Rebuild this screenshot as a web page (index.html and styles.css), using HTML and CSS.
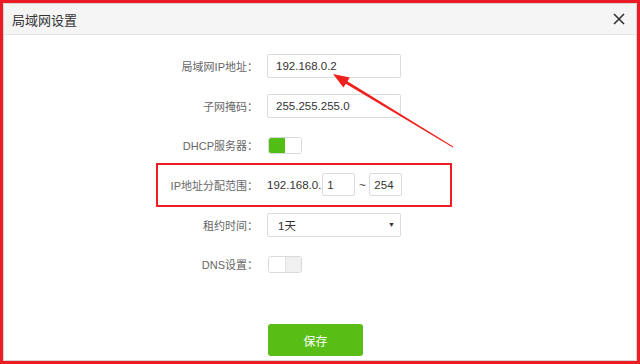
FILE: index.html
```html
<!DOCTYPE html>
<html lang="zh-CN">

<head>
    <meta charset="UTF-8">
    <meta name="viewport" content="width=device-width, initial-scale=1.0">
    <title>局域网设置</title>
    <link rel="stylesheet" href="styles.css">
</head>

<body>
    <div class="dialog">
        <div class="dialog-head">
            <h1>局域网设置</h1>
            <button class="close-btn">
                <svg width="12" height="12" viewBox="0 0 12 12">
                    <path d="M1 1L11 11M11 1L1 11" stroke="#333" stroke-width="1.6" fill="none"/>
                </svg>
            </button>
        </div>

        <div class="form">
            <div class="row">
                <label>局域网IP地址：</label>
                <input class="field" type="text" value="192.168.0.2">
            </div>
            <div class="row">
                <label>子网掩码：</label>
                <input class="field" type="text" value="255.255.255.0">
            </div>
            <div class="row">
                <label>DHCP服务器：</label>
                <span class="switch on"><i></i><i></i></span>
            </div>
            <div class="row marked">
                <label>IP地址分配范围：</label>
                <span class="prefix">192.168.0.</span>
                <input class="field short" type="text" value="1">
                <span class="tilde">~</span>
                <input class="field short" type="text" value="254">
            </div>
            <div class="row">
                <label>租约时间：</label>
                <div class="select">
                    <span>1天</span>
                    <span class="caret">▼</span>
                </div>
            </div>
            <div class="row">
                <label>DNS设置：</label>
                <span class="switch"><i></i><i></i></span>
            </div>
            <button class="save-btn">保存</button>
        </div>

        <!-- annotation arrow -->
        <svg class="arrow" width="640" height="364" viewBox="0 0 640 364">
            <polygon points="333,74 349.8,77.4 347.4,81.2 453.3,146.6 452.7,147.4 345.8,83.8 343.4,87.6" fill="#f0201c"/>
        </svg>
    </div>
</body>

</html>
```

FILE: styles.css
```css
* {
    margin: 0;
    padding: 0;
    box-sizing: border-box;
    font-family: "Liberation Sans", "Noto Sans CJK SC", sans-serif;
}

body {
    height: 100vh;
    background: #ec1c24;
}

.dialog {
    position: relative;
    margin: 3px;
    height: calc(100vh - 6px);
    background: #fff;
    border: 1px solid #d6d6d6;
}

.dialog-head {
    display: flex;
    align-items: center;
    justify-content: space-between;
    height: 31px;
    padding: 0 11px 0 8px;
    background: #f5f5f5;
    border-bottom: 1px solid #e4e4e4;
}

.dialog-head h1 {
    font-size: 13px;
    font-weight: normal;
    color: #333;
}

.close-btn {
    display: flex;
    border: none;
    background: none;
}

.form {
    padding: 11px 0 0 154px;
}

.row {
    display: flex;
    align-items: center;
    width: 292px;
    height: 39.7px;
    font-size: 11.5px;
    color: #333;
}

.row.marked {
    outline: 2px solid #ee1d23;
}

.row label {
    width: 100px;
    margin-right: 9px;
    text-align: right;
    font-size: 11px;
    color: #666;
}

.field {
    width: 134px;
    height: 24px;
    padding: 0 8px;
    border: 1px solid #dcdcdc;
    border-radius: 2px;
    font-size: 11.5px;
    color: #333;
    outline: none;
}

.field.short {
    width: 33px;
    height: 23px;
    padding: 0 4px;
}

.prefix {
    margin-right: 1px;
}

.tilde {
    width: 14px;
    text-align: center;
}

.select {
    display: flex;
    align-items: center;
    justify-content: space-between;
    width: 134px;
    height: 24px;
    padding: 0 5px 0 10px;
    border: 1px solid #dcdcdc;
    border-radius: 2px;
}

.select .caret {
    font-size: 7px;
    color: #333;
}

.switch {
    display: flex;
    width: 34px;
    height: 17px;
    margin-left: 1px;
    border: 1px solid #d9d9d9;
    border-radius: 3px;
    overflow: hidden;
}

.switch i {
    flex: 1;
    background: #fff;
}

.switch i:first-child {
    border-right: 1px solid #e0e0e0;
}

.switch i:last-child {
    background: #f0f0f0;
}

.switch.on i:first-child {
    background: #52be14;
    border-right: none;
}

.switch.on i:last-child {
    background: #fff;
}

.save-btn {
    display: block;
    width: 95px;
    height: 32px;
    margin: 40px 0 0 110px;
    border: none;
    border-radius: 3px;
    background: #58be16;
    color: #fff;
    font-size: 12px;
}

.arrow {
    position: absolute;
    top: -4px;
    left: -4px;
    pointer-events: none;
}
```
